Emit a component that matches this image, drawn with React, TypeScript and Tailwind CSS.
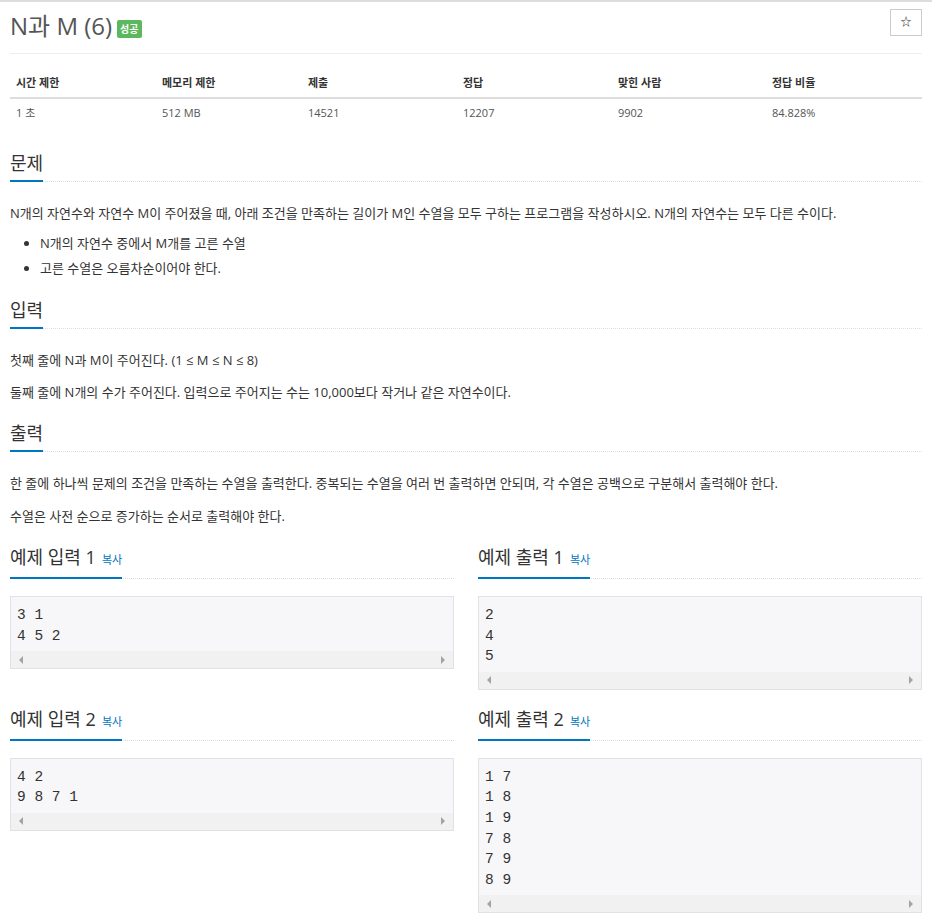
const limits = [
  { head: "시간 제한", value: "1 초" },
  { head: "메모리 제한", value: "512 MB" },
  { head: "제출", value: "14521" },
  { head: "정답", value: "12207" },
  { head: "맞힌 사람", value: "9902" },
  { head: "정답 비율", value: "84.828%" },
];

const samples = [
  { title: "예제 입력 1", lines: ["3 1", "4 5 2"] },
  { title: "예제 출력 1", lines: ["2", "4", "5"] },
  { title: "예제 입력 2", lines: ["4 2", "9 8 7 1"] },
  { title: "예제 출력 2", lines: ["1 7", "1 8", "1 9", "7 8", "7 9", "8 9"] },
];

function Headline({ children }: { children: React.ReactNode }) {
  return (
    <div className="flex border-b border-dotted border-[#ddd]">
      <h2 className="-mb-px border-b-2 border-[#0076c0] pb-[3px] text-[18px] leading-[28px] font-normal text-[#333]">
        {children}
      </h2>
    </div>
  );
}

function Sample({ title, lines }: { title: string; lines: string[] }) {
  return (
    <div>
      <Headline>
        {title}
        <span className="ml-[6px] text-[11px] text-[#0076c0]">복사</span>
      </Headline>
      <div className="mt-[17px] border border-[#e1e1e8] bg-[#f7f7f9]">
        <pre className="px-[6px] pt-[8px] pb-[5px] text-[14.5px] leading-[20.6px] text-[#333] font-['Liberation_Mono',monospace]">
          {lines.join("\n")}
        </pre>
        <div className="flex h-[17px] items-center justify-between bg-[#f1f1f1] px-[8px]">
          <span className="h-0 w-0 border-y-[4px] border-r-[4px] border-y-transparent border-r-[#a3a3a3]" />
          <span className="h-0 w-0 border-y-[4px] border-l-[4px] border-y-transparent border-l-[#a3a3a3]" />
        </div>
      </div>
    </div>
  );
}

export default function App() {
  return (
    <div className="min-h-screen border-t-2 border-[#ddd] bg-white px-[10px] pb-[8px] text-[#333] font-['Open_Sans','Noto_Sans_CJK_KR',sans-serif]">
      <div className="flex items-start justify-between border-b border-[#eee] pt-[7px] pb-[10px]">
        <h1 className="text-[24px] leading-[34px] font-normal text-[#555]">
          N과 M (6)
          <span className="ml-[5px] inline-block h-[18px] rounded-[2px] bg-[#5cb85c] px-[3px] align-[2px] text-[10px] leading-[18px] font-bold text-white">
            성공
          </span>
        </h1>
        <button className="flex h-[27px] w-[32px] items-center justify-center border border-[#ccc] bg-white text-[11px] text-[#222]">
          ☆
        </button>
      </div>

      <div className="mt-[15px] grid grid-cols-[146px_146px_155px_155px_154px_1fr] text-[11px] leading-[16px]">
        {limits.map((c) => (
          <div key={c.head} className="border-b-2 border-[#ddd] px-[6px] py-[6px] font-bold text-[#333]">
            {c.head}
          </div>
        ))}
        {limits.map((c) => (
          <div key={c.head + "v"} className="px-[6px] py-[6px] text-[#555]">
            {c.value}
          </div>
        ))}
      </div>

      <section className="mt-[22px]">
        <Headline>문제</Headline>
        <div className="mt-[21px] text-[13px] leading-[20px]">
          <p>N개의 자연수와 자연수 M이 주어졌을 때, 아래 조건을 만족하는 길이가 M인 수열을 모두 구하는 프로그램을 작성하시오. N개의 자연수는 모두 다른 수이다.</p>
          <ul className="mt-[8px] list-disc pl-[30px] leading-[25px]">
            <li>N개의 자연수 중에서 M개를 고른 수열</li>
            <li>고른 수열은 오름차순이어야 한다.</li>
          </ul>
        </div>
      </section>

      <section className="mt-[15px]">
        <Headline>입력</Headline>
        <div className="mt-[21px] text-[13px] leading-[20px]">
          <p>첫째 줄에 N과 M이 주어진다. (1 ≤ M ≤ N ≤ 8)</p>
          <p className="mt-[12px]">둘째 줄에 N개의 수가 주어진다. 입력으로 주어지는 수는 10,000보다 작거나 같은 자연수이다.</p>
        </div>
      </section>

      <section className="mt-[17px]">
        <Headline>출력</Headline>
        <div className="mt-[21px] text-[13px] leading-[20px]">
          <p>한 줄에 하나씩 문제의 조건을 만족하는 수열을 출력한다. 중복되는 수열을 여러 번 출력하면 안되며, 각 수열은 공백으로 구분해서 출력해야 한다.</p>
          <p className="mt-[13px]">수열은 사전 순으로 증가하는 순서로 출력해야 한다.</p>
        </div>
      </section>

      <div className="mt-[17px] grid grid-cols-2 gap-x-6 gap-y-[15px]">
        {samples.map((s) => (
          <Sample key={s.title} title={s.title} lines={s.lines} />
        ))}
      </div>
    </div>
  );
}
